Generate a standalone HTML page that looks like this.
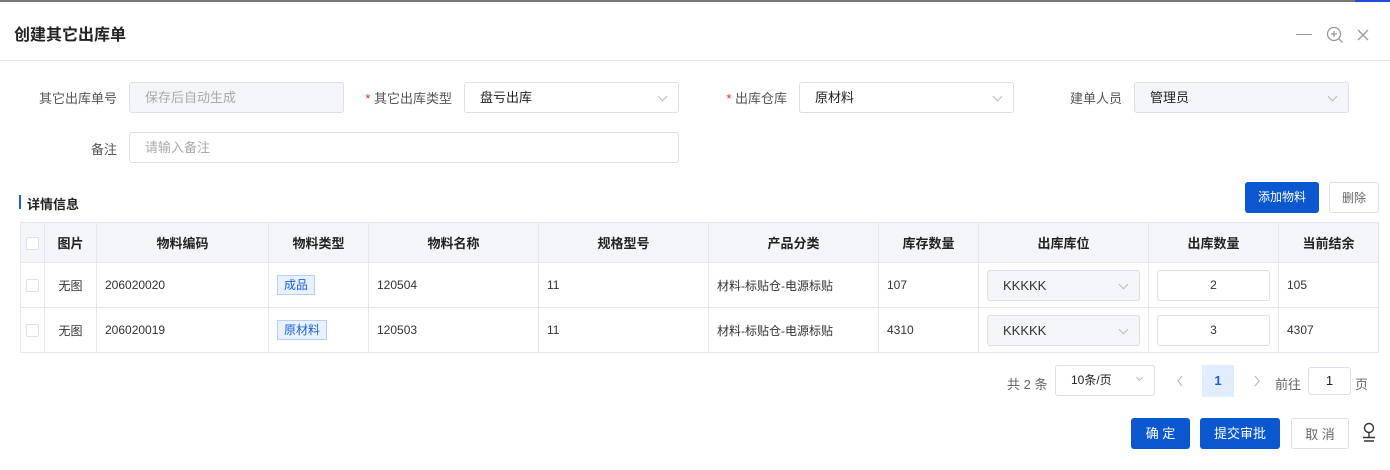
<!DOCTYPE html>
<html><head><meta charset="utf-8"><style>
*{box-sizing:border-box;margin:0;padding:0}
body{width:1390px;height:470px;background:#fff;font-family:"Liberation Sans","Noto Sans CJK SC",sans-serif;font-size:13px;color:#333;position:relative;overflow:hidden}
.a{position:absolute}
.lbl{position:absolute;color:#555;font-size:13px;text-align:right}
.inp{position:absolute;height:31px;border:1px solid #dcdfe6;border-radius:3px;padding-left:15px;line-height:29px;font-size:13px;color:#222}
.dis{background:#f3f5f9}
.chev{position:absolute;right:12px;top:10px;width:7px;height:7px;border-right:1px solid #bbb;border-bottom:1px solid #bbb;transform:rotate(45deg)}
.star{color:#f5222d}
table{position:absolute;left:20px;top:222px;width:1359px;border-collapse:collapse;font-size:12px}
td,th{border:1px solid #e4e7ed;height:45px;padding:0 8px;text-align:left;color:#333;font-weight:normal}
th{height:40px;background:#f3f5f9;font-weight:bold;text-align:center;font-size:13px;color:#222}
.cb{width:13px;height:13px;border:1px solid #dcdfe6;border-radius:2px;display:inline-block;background:#fff;vertical-align:middle}
.tag{display:inline-block;border:1px solid #b3d0f5;background:#e8f1fd;color:#1a5fd8;padding:0 6px;line-height:18px;font-size:12px}
.btn{position:absolute;height:31px;line-height:31px;text-align:center;border-radius:3px;font-size:13px}
.pri{background:#0b57d0;color:#fff}
.def{border:1px solid #dcdfe6;color:#666;background:#fff}
</style></head><body>
<div class="a" style="left:0;top:0;width:1390px;height:2px;background:#777"></div>
<div class="a" style="left:1355px;top:0;width:35px;height:2px;background:#1d4ed8"></div>
<div class="a" style="left:14px;top:21px;font-size:16px;font-weight:bold;color:#222">创建其它出库单</div>
<div class="a" style="left:1296px;top:34px;width:16px;height:1px;background:#999"></div>
<svg class="a" style="left:1326px;top:26px" width="18" height="18" viewBox="0 0 18 18" fill="none" stroke="#999" stroke-width="1.3"><circle cx="8" cy="8" r="6.5"/><path d="M8 5v6M5 8h6M13 13l3.5 3.5"/></svg>
<svg class="a" style="left:1357px;top:29px" width="12" height="12" viewBox="0 0 12 12" stroke="#999" stroke-width="1.3"><path d="M1 1l10 10M11 1L1 11"/></svg>
<div class="a" style="left:0;top:60px;width:1390px;height:1px;background:#e4e4e4"></div>

<div class="lbl" style="left:30px;top:88px;width:87px">其它出库单号</div>
<div class="inp dis" style="left:129px;top:82px;width:215px;color:#aaa">保存后自动生成</div>
<div class="lbl" style="left:360px;top:88px;width:92px"><span class="star">* </span>其它出库类型</div>
<div class="inp" style="left:464px;top:82px;width:215px">盘亏出库<i class="chev"></i></div>
<div class="lbl" style="left:700px;top:88px;width:87px"><span class="star">* </span>出库仓库</div>
<div class="inp" style="left:799px;top:82px;width:215px">原材料<i class="chev"></i></div>
<div class="lbl" style="left:1040px;top:88px;width:82px">建单人员</div>
<div class="inp dis" style="left:1134px;top:82px;width:215px">管理员<i class="chev"></i></div>
<div class="lbl" style="left:30px;top:139px;width:87px">备注</div>
<div class="inp" style="left:129px;top:132px;width:550px;color:#aaa">请输入备注</div>

<div class="a" style="left:19px;top:195px;width:2px;height:14px;background:#1a5fd8"></div>
<div class="a" style="left:27px;top:194px;font-size:13px;font-weight:bold;color:#222">详情信息</div>
<div class="btn pri" style="left:1245px;top:182px;width:74px;font-size:12px">添加物料</div>
<div class="btn def" style="left:1329px;top:182px;width:50px;font-size:12px">删除</div>

<table>
<tr><th style="width:24px;padding:0 5px"><span class="cb"></span></th><th style="width:52px">图片</th><th style="width:172px">物料编码</th><th style="width:100px">物料类型</th><th style="width:170px">物料名称</th><th style="width:170px">规格型号</th><th style="width:170px">产品分类</th><th style="width:100px">库存数量</th><th style="width:170px">出库库位</th><th style="width:130px">出库数量</th><th>当前结余</th></tr>
<tr><td style="padding:0 5px"><span class="cb"></span></td><td style="text-align:center">无图</td><td>206020020</td><td><span class="tag">成品</span></td><td>120504</td><td>11</td><td>材料-标贴仓-电源标贴</td><td>107</td><td><div style="position:relative;height:31px;background:#f3f5f9;border:1px solid #dcdfe6;border-radius:3px;line-height:29px;padding-left:15px;font-size:13px">KKKKK<i class="chev"></i></div></td><td><div style="height:31px;border:1px solid #dcdfe6;border-radius:3px;line-height:29px;text-align:center">2</div></td><td>105</td></tr>
<tr><td style="padding:0 5px"><span class="cb"></span></td><td style="text-align:center">无图</td><td>206020019</td><td><span class="tag">原材料</span></td><td>120503</td><td>11</td><td>材料-标贴仓-电源标贴</td><td>4310</td><td><div style="position:relative;height:31px;background:#f3f5f9;border:1px solid #dcdfe6;border-radius:3px;line-height:29px;padding-left:15px;font-size:13px">KKKKK<i class="chev"></i></div></td><td><div style="height:31px;border:1px solid #dcdfe6;border-radius:3px;line-height:29px;text-align:center">3</div></td><td>4307</td></tr>
</table>

<div class="a" style="left:1007px;top:374px;color:#666">共 2 条</div>
<div class="inp" style="left:1055px;top:365px;width:100px;font-size:12px">10条/页<i class="chev" style="top:9px;width:5px;height:5px"></i></div>
<svg class="a" style="left:1176px;top:375px" width="8" height="12" viewBox="0 0 8 12" fill="none" stroke="#bbb" stroke-width="1.2"><path d="M6 1L2 6l4 5"/></svg>
<div class="a" style="left:1202px;top:365px;width:32px;height:32px;background:#e1ecfd;color:#1a5fd8;font-weight:bold;text-align:center;line-height:32px">1</div>
<svg class="a" style="left:1253px;top:375px" width="8" height="12" viewBox="0 0 8 12" fill="none" stroke="#bbb" stroke-width="1.2"><path d="M2 1l4 5-4 5"/></svg>
<div class="a" style="left:1275px;top:374px;color:#666">前往</div>
<div class="inp" style="left:1308px;top:367px;width:43px;height:28px;line-height:26px;padding:0;text-align:center">1</div>
<div class="a" style="left:1355px;top:374px;color:#666">页</div>

<div class="btn pri" style="left:1131px;top:418px;width:59px">确 定</div>
<div class="btn pri" style="left:1200px;top:418px;width:80px">提交审批</div>
<div class="btn def" style="left:1291px;top:418px;width:58px">取 消</div>
<svg class="a" style="left:1360px;top:421px" width="18" height="22" viewBox="0 0 18 22" fill="none" stroke="#333" stroke-width="1.4"><circle cx="9" cy="7" r="4.5"/><path d="M9 11.5v5M3 16.5h12M4 20h10"/></svg>
</body></html>
